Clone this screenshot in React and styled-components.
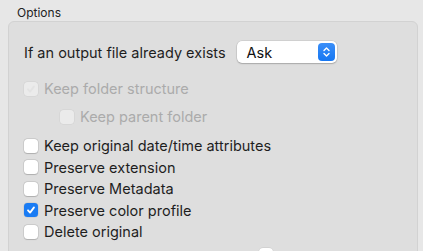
import React from 'react';
import styled, { createGlobalStyle } from 'styled-components';

const GlobalStyle = createGlobalStyle`
    html, body {
        margin: 0;
        padding: 0;
        background: #e7e7e7;
        font-family: Inter, "Liberation Sans", sans-serif;
        -webkit-font-smoothing: antialiased;
    }
`;

const Page = styled.div`
    width: 423px;
    height: 251px;
    overflow: hidden;
    padding: 5px 5px 0 8px;
    box-sizing: border-box;
`;

const Legend = styled.div`
    font-size: 12px;
    color: #222;
    margin-left: 9px;
    line-height: 15px;
`;

const Box = styled.div`
    margin-top: 1px;
    height: 260px;
    border: 1px solid #d2d2d2;
    border-radius: 6px;
    background: #dedede;
    padding: 19px 15px 0 15px;
    box-sizing: border-box;
    position: relative;
`;

const SelectRow = styled.div`
    display: flex;
    align-items: center;
    gap: 11px;
    font-size: 14.5px;
    color: #1e1e1e;
    margin-bottom: 14px;
`;

const Select = styled.div`
    width: 100px;
    height: 22px;
    box-sizing: border-box;
    background: #fff;
    border-radius: 5px;
    box-shadow: 0 0 0 0.5px rgba(0, 0, 0, 0.12), 0 1px 1.5px rgba(0, 0, 0, 0.2);
    display: flex;
    align-items: center;
    justify-content: space-between;
    padding: 0 2px 0 10px;
    font-size: 14.5px;
    color: #111;
`;

const Stepper = styled.div`
    width: 17px;
    height: 18px;
    border-radius: 4px;
    background: linear-gradient(#3a8ef8, #1677f2);
    display: flex;
    align-items: center;
    justify-content: center;
`;

const List = styled.div`
    display: flex;
    flex-direction: column;
`;

const Row = styled.label`
    display: flex;
    align-items: center;
    gap: 6px;
    height: ${(p) => p.$h || 21.5}px;
    padding-left: ${(p) => (p.$indent ? 36 : 0)}px;
    margin-top: ${(p) => p.$gap || 0}px;
    font-size: 14.5px;
    color: ${(p) => (p.$disabled ? '#ababab' : '#1e1e1e')};
`;

const Check = styled.span`
    width: 14px;
    height: 14px;
    box-sizing: border-box;
    border-radius: 3.5px;
    flex-shrink: 0;
    display: flex;
    align-items: center;
    justify-content: center;
    background: ${(p) => (p.$checked ? '#1a7cf4' : p.$disabled ? '#ebebeb' : '#fff')};
    box-shadow: ${(p) =>
        p.$checked
            ? '0 0 0 0.5px rgba(0,0,0,0.1)'
            : p.$disabled
            ? '0 0 0 0.5px rgba(0,0,0,0.06)'
            : '0 0 0 0.5px rgba(0,0,0,0.14), 0 0.5px 1px rgba(0,0,0,0.15)'};
`;

const Peek = styled.div`
    position: absolute;
    left: 250px;
    top: 226px;
    width: 14px;
    height: 14px;
    border-radius: 4px;
    background: #fff;
    box-shadow: 0 0 0 0.5px rgba(0, 0, 0, 0.1);
`;

const Tick = ({ color }) => (
    <svg width="10" height="10" viewBox="0 0 10 10">
        <path d="M2 5.3 L4.1 7.6 L8 2.4" fill="none" stroke={color} strokeWidth="1.8" strokeLinecap="round" strokeLinejoin="round" />
    </svg>
);

const Option = ({ label, checked, disabled, indent, gap, h }) => (
    <Row $disabled={disabled} $indent={indent} $gap={gap} $h={h}>
        <Check $checked={checked} $disabled={disabled}>
            {checked && <Tick color="#fff" />}
            {disabled && !indent && <Tick color="#e3e3e3" />}
        </Check>
        {label}
    </Row>
);

const App = () => {
    return (
        <Page>
            <GlobalStyle />
            <Legend>Options</Legend>
            <Box>
                <SelectRow>
                    If an output file already exists
                    <Select>
                        Ask
                        <Stepper>
                            <svg width="9" height="12" viewBox="0 0 9 12">
                                <path d="M2 4.5 L4.5 2 L7 4.5 M2 7.5 L4.5 10 L7 7.5" fill="none" stroke="#fff" strokeWidth="1.4" strokeLinecap="round" strokeLinejoin="round" />
                            </svg>
                        </Stepper>
                    </Select>
                </SelectRow>
                <List>
                    <Option label="Keep folder structure" disabled h={23} />
                    <Option label="Keep parent folder" disabled indent h={29} gap={2} />
                    <Option label="Keep original date/time attributes" gap={4} />
                    <Option label="Preserve extension" />
                    <Option label="Preserve Metadata" />
                    <Option label="Preserve color profile" checked />
                    <Option label="Delete original" />
                </List>
                <Peek />
            </Box>
        </Page>
    );
};

export default App;
